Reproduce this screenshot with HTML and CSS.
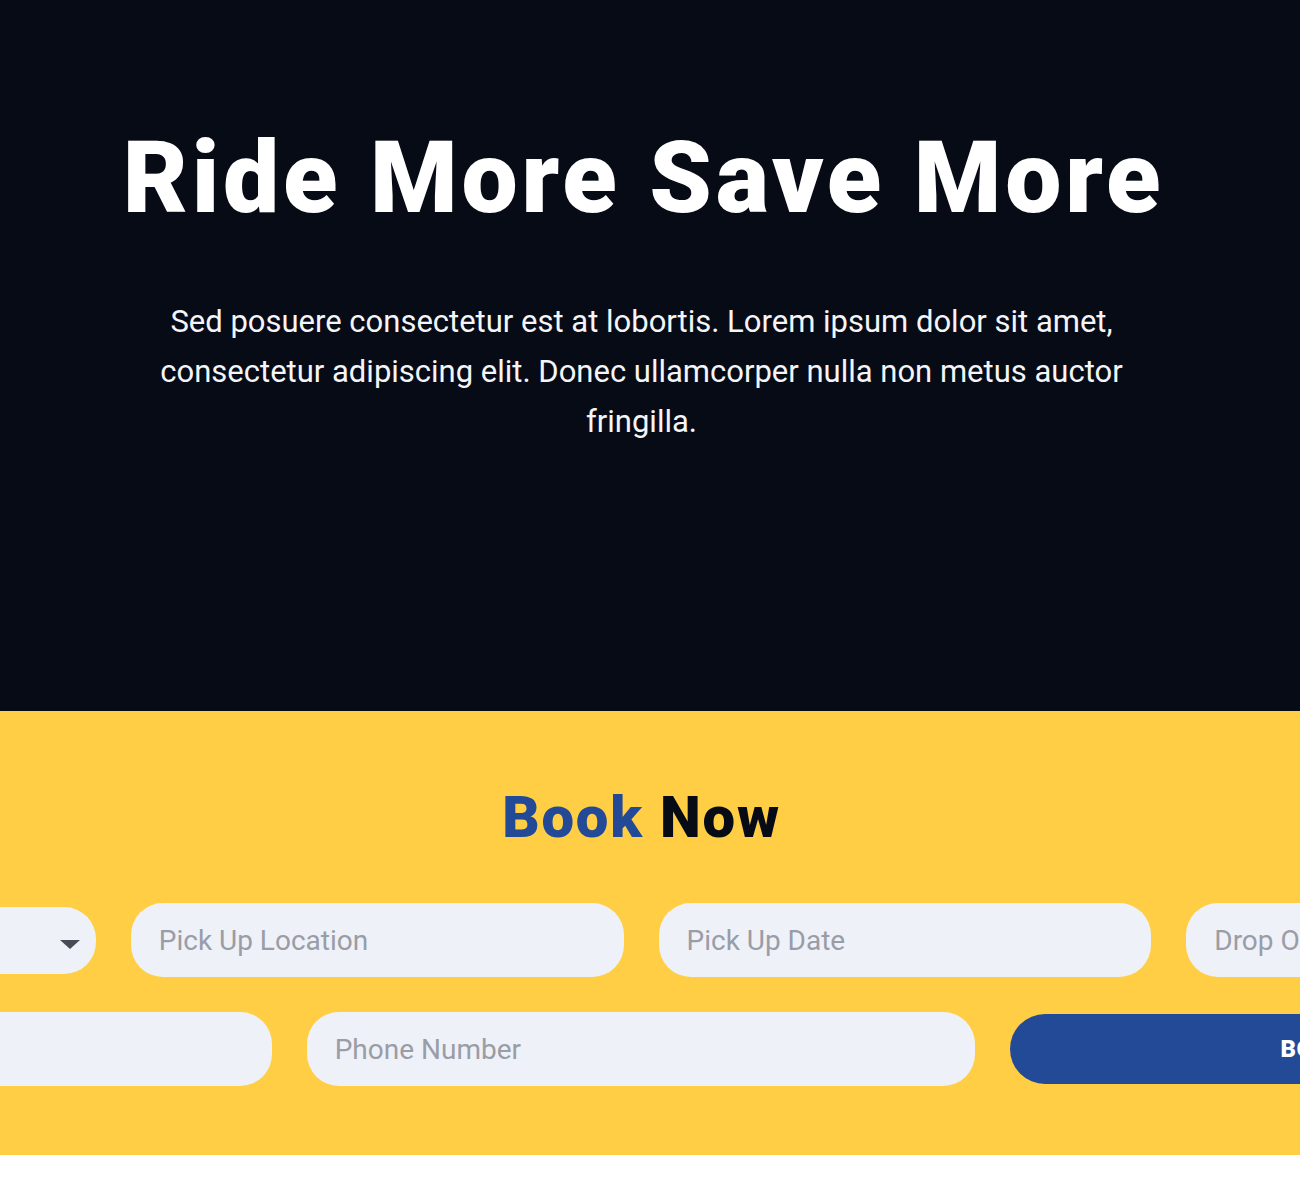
FILE: index.html
```html
<!DOCTYPE html>
<html lang="en">
<head>
<meta charset="utf-8">
<title>Ride More Save More</title>
<link rel="stylesheet" href="styles.css">
</head>
<body>
<div class="page">
  <section class="hero">
    <h1 class="hero-title">Ride More Save More</h1>
    <p class="hero-text">Sed posuere consectetur est at lobortis. Lorem ipsum dolor sit amet, consectetur adipiscing elit. Donec ullamcorper nulla non metus auctor fringilla.</p>
  </section>
  <section class="book">
    <h2 class="book-title"><span class="blue">Book</span> Now</h2>
    <form class="book-form">
      <div class="row row-4">
        <div class="field select"><span class="caret"></span></div>
        <div class="field">Pick Up Location</div>
        <div class="field">Pick Up Date</div>
        <div class="field">Drop Off Date</div>
      </div>
      <div class="row row-3">
        <div class="field">Your Name</div>
        <div class="field">Phone Number</div>
        <button type="button" class="btn">BOOK NOW</button>
      </div>
    </form>
  </section>
</div>
</body>
</html>
```
FILE: styles.css
```css
html, body {
  margin: 0;
  padding: 0;
  background: #ffffff;
  overflow-x: hidden;
}
body {
  font-family: Roboto, "Liberation Sans", sans-serif;
}
.page {
  width: 1300px;
}
.hero {
  background: #070b16;
  height: 711px;
  box-sizing: border-box;
  padding: 118px 17px 0 0;
  text-align: center;
}
.hero-title {
  margin: 0;
  color: #ffffff;
  font-family: Roboto, sans-serif;
  font-weight: 900;
  font-size: 100px;
  line-height: 120px;
  letter-spacing: 3.8px;
  padding-left: 4px;
}
.hero-text {
  margin: 59px auto 0;
  max-width: 980px;
  color: #f4f5f8;
  font-size: 31px;
  line-height: 50px;
  font-weight: 400;
}
.book {
  background: #ffce45;
  height: 444px;
  box-sizing: border-box;
  padding: 68px 17px 0 0;
  overflow: hidden;
  text-align: center;
}
.book-title {
  margin: 0;
  font-family: Roboto, sans-serif;
  font-weight: 900;
  font-size: 58px;
  line-height: 76px;
  letter-spacing: 1.8px;
  color: #070b16;
}
.blue {
  color: #234a96;
}
.book-form {
  width: 2076px;
  margin: 48px 0 0 -397px;
  display: flex;
  flex-direction: column;
  gap: 35px;
}
.row {
  display: grid;
  gap: 35px;
  align-items: center;
}
.row-4 {
  grid-template-columns: repeat(4, 1fr);
}
.row-3 {
  grid-template-columns: repeat(3, 1fr);
}
.field {
  height: 74px;
  border-radius: 32px;
  background: #eef1f8;
  color: #9a9ca6;
  font-size: 28px;
  text-align: left;
  padding: 0 28px;
  display: flex;
  align-items: center;
  box-sizing: border-box;
}
.select {
  height: 67px;
  justify-content: flex-end;
  padding-right: 16px;
}
.caret {
  width: 0;
  height: 0;
  border-left: 10px solid transparent;
  border-right: 10px solid transparent;
  border-top: 9px solid #474b55;
  margin-top: 8px;
}
.btn {
  height: 70px;
  border: none;
  border-radius: 35px;
  background: #234a96;
  color: #ffffff;
  font-family: Roboto, sans-serif;
  font-weight: 900;
  font-size: 24px;
  letter-spacing: 0.5px;
  cursor: pointer;
}
```
